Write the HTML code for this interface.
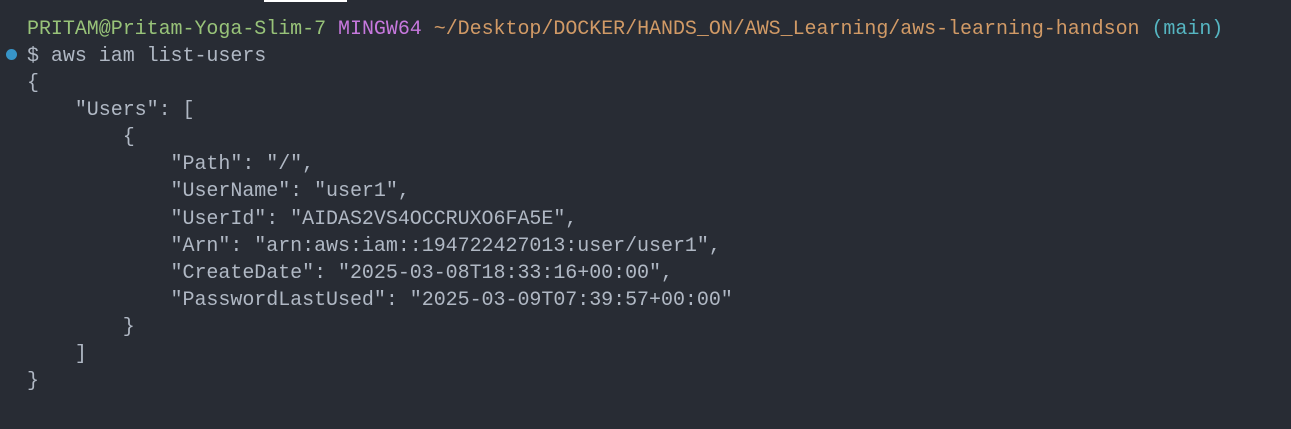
<!DOCTYPE html>
<html><head><meta charset="utf-8"><style>
html,body{margin:0;padding:0;}
body{width:1291px;height:429px;background:#282c34;overflow:hidden;position:relative;font-family:"Liberation Mono",monospace;font-size:20px;color:#b0b8c4;}
pre{margin:0;position:absolute;left:27px;top:16px;font:inherit;line-height:27.08px;letter-spacing:-0.04px;white-space:pre;}
.g{color:#98c379}.m{color:#c678dd}.o{color:#d19a66}.c{color:#56b6c2}
.bar{position:absolute;left:264px;top:0;width:83px;height:2px;background:#fff}
.dot{position:absolute;left:6px;top:49px;width:11px;height:11px;border-radius:50%;background:#3794c7}
</style></head><body>
<div class="bar"></div><div class="dot"></div>
<pre><span class="g">PRITAM@Pritam-Yoga-Slim-7</span> <span class="m">MINGW64</span> <span class="o">~/Desktop/DOCKER/HANDS_ON/AWS_Learning/aws-learning-handson</span> <span class="c">(main)</span>
$ aws iam list-users
{
    "Users": [
        {
            "Path": "/",
            "UserName": "user1",
            "UserId": "AIDAS2VS4OCCRUXO6FA5E",
            "Arn": "arn:aws:iam::194722427013:user/user1",
            "CreateDate": "2025-03-08T18:33:16+00:00",
            "PasswordLastUsed": "2025-03-09T07:39:57+00:00"
        }
    ]
}</pre>
</body></html>
